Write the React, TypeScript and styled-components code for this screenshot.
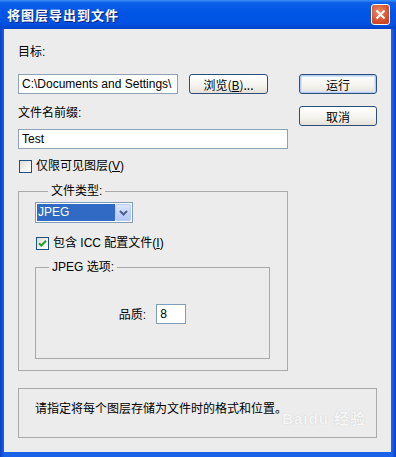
import React from 'react'
import styled, { createGlobalStyle } from 'styled-components'

const GlobalStyle = createGlobalStyle`
  html, body {
    margin: 0;
    padding: 0;
    background: #ffffff;
  }
  body {
    font-family: 'Liberation Sans', 'Noto Sans CJK SC', sans-serif;
    font-size: 12px;
    color: #000000;
  }
`

const CheckMark = () => (
  <svg width="9" height="9" viewBox="0 0 9 9">
    <path d="M1 4.2 L3.3 6.6 L8 1.8" stroke="#21a121" strokeWidth="2" fill="none" />
  </svg>
)

const Chevron = () => (
  <svg width="9" height="6" viewBox="0 0 9 6">
    <path d="M1 1 L4.5 4.5 L8 1" stroke="#4d6185" strokeWidth="2" fill="none" />
  </svg>
)

const App = () => {
  return (
    <>
      <GlobalStyle />
      <Window>
        <TitleBar>
          <Title>将图层导出到文件</Title>
          <CloseButton>
            <svg width="11" height="11" viewBox="0 0 11 11">
              <path d="M1.5 1.5 L9.5 9.5 M9.5 1.5 L1.5 9.5" stroke="#ffffff" strokeWidth="2" />
            </svg>
          </CloseButton>
        </TitleBar>
        <Body>
          <TopSection>
            <LeftColumn>
              <Label>目标:</Label>
              <PathRow>
                <TextBox $width={160} defaultValue="C:\Documents and Settings\" />
                <Button $width={79}>
                  浏览(<u>B</u>)...
                </Button>
              </PathRow>
              <Label $top={11}>文件名前缀:</Label>
              <TextBox $width={270} $top={8} defaultValue="Test" />
              <CheckRow $top={11}>
                <CheckBox />
                <span>
                  仅限可见图层(<u>V</u>)
                </span>
              </CheckRow>
              <GroupBox $top={10} $pad="3px 17px 11px 16px">
                <Legend>文件类型:</Legend>
                <Select>
                  <SelectValue>JPEG</SelectValue>
                  <SelectArrow>
                    <Chevron />
                  </SelectArrow>
                </Select>
                <CheckRow $top={14}>
                  <CheckBox>
                    <CheckMark />
                  </CheckBox>
                  <span>
                    包含 ICC 配置文件(<u>I</u>)
                  </span>
                </CheckRow>
                <GroupBox $top={9} $pad="0 0 6px 0">
                  <Legend>JPEG 选项:</Legend>
                  <QualityRow>
                    <span>品质:</span>
                    <SmallBox defaultValue="8" />
                  </QualityRow>
                </GroupBox>
              </GroupBox>
            </LeftColumn>
            <RightColumn>
              <Button $width={78} $default>
                运行
              </Button>
              <Button $width={78}>取消</Button>
            </RightColumn>
          </TopSection>
          <InfoBox>
            请指定将每个图层存储为文件时的格式和位置。
            <Watermark>
              Bai<b>du</b> 经验
            </Watermark>
          </InfoBox>
        </Body>
      </Window>
    </>
  )
}

const Window = styled.div`
  width: 396px;
  height: 457px;
  display: flex;
  flex-direction: column;
  background: linear-gradient(90deg, #0a3fc9 0%, #1a62e8 1%, #1a62e8 99%, #0a3fc9 100%);
  box-sizing: border-box;
  padding: 0 5px 5px 4px;
`

const TitleBar = styled.div`
  height: 29px;
  margin: 0 -5px 0 -4px;
  padding: 0 6px 0 7px;
  display: flex;
  align-items: center;
  justify-content: space-between;
  background: linear-gradient(
    180deg,
    #3d8ef7 0%,
    #0a5ee8 10%,
    #0055e6 45%,
    #0052e2 80%,
    #0043c8 100%
  );
`

const Title = styled.span`
  color: #ffffff;
  font-family: 'Noto Sans CJK SC', sans-serif;
  font-size: 13px;
  font-weight: bold;
  letter-spacing: 1px;
  text-shadow: 1px 1px 0 #0a1e7a;
`

const CloseButton = styled.div`
  width: 19px;
  height: 21px;
  box-sizing: border-box;
  border: 1px solid #ffffff;
  border-radius: 3px;
  display: flex;
  align-items: center;
  justify-content: center;
  background: radial-gradient(circle at 40% 35%, #ec8f6e 0%, #d8552f 55%, #c0391a 100%);
`

const Body = styled.div`
  flex: 1;
  background: #ececec;
  padding: 15px 14px 0 14px;
  display: flex;
  flex-direction: column;
`

const TopSection = styled.div`
  display: flex;
  gap: 11px;
`

const LeftColumn = styled.div`
  width: 270px;
  display: flex;
  flex-direction: column;
`

const RightColumn = styled.div`
  padding-top: 30px;
  display: flex;
  flex-direction: column;
  gap: 12px;
`

const Label = styled.div<{ $top?: number }>`
  margin-top: ${(p) => p.$top ?? 0}px;
  line-height: 16px;
  height: 16px;
`

const PathRow = styled.div`
  margin-top: 14px;
  display: flex;
  gap: 11px;
`

const TextBox = styled.input.attrs({ readOnly: true })<{ $width: number; $top?: number }>`
  width: ${(p) => p.$width}px;
  height: 20px;
  margin-top: ${(p) => p.$top ?? 0}px;
  box-sizing: border-box;
  border: 1px solid #8fa1b5;
  background: #ffffff;
  padding: 0 3px;
  font-family: 'Liberation Sans', 'Noto Sans CJK SC', sans-serif;
  font-size: 12px;
  color: #000000;
  outline: none;
`

const SmallBox = styled(TextBox).attrs({ $width: 30 })`
  border-color: #7f9db9;
`

const Button = styled.div<{ $width: number; $default?: boolean }>`
  width: ${(p) => p.$width}px;
  height: 20px;
  box-sizing: border-box;
  border: 1px solid #2c4f7a;
  border-radius: 3px;
  display: flex;
  align-items: center;
  justify-content: center;
  font-family: 'Noto Sans CJK SC', sans-serif;
  font-size: 12px;
  background: linear-gradient(180deg, #ffffff 0%, #f4f3ee 60%, #e3e0d7 100%);
  box-shadow: ${(p) => (p.$default ? 'inset 0 0 0 1px #b5cdf4, inset 0 0 0 2px #d6e2f8' : 'none')};
`

const CheckRow = styled.div<{ $top?: number }>`
  margin-top: ${(p) => p.$top ?? 0}px;
  display: flex;
  align-items: center;
  gap: 4px;
  height: 13px;
  line-height: 13px;
  white-space: nowrap;
`

const CheckBox = styled.div`
  width: 13px;
  height: 13px;
  margin-left: 1px;
  box-sizing: border-box;
  border: 1px solid #1c5180;
  background: linear-gradient(135deg, #dcdcd7 0%, #f4f4f1 60%, #ffffff 100%);
  display: flex;
  align-items: center;
  justify-content: center;
`

const GroupBox = styled.fieldset<{ $top?: number; $pad: string }>`
  margin: ${(p) => p.$top ?? 0}px 0 0 0;
  padding: ${(p) => p.$pad};
  border: 1px solid #a9a9a9;
  min-width: 0;
`

const Legend = styled.legend`
  margin-left: 13px;
  padding: 0 3px;
  line-height: 16px;
  font-family: 'Liberation Sans', 'Noto Sans CJK SC', sans-serif;
  font-size: 12px;
`

const Select = styled.div`
  width: 98px;
  height: 21px;
  box-sizing: border-box;
  border: 1px solid #7f9db9;
  background: #ffffff;
  display: flex;
  padding: 1px;
`

const SelectValue = styled.div`
  flex: 1;
  background: #316ac5;
  color: #ffffff;
  line-height: 17px;
  padding-left: 1px;
`

const SelectArrow = styled.div`
  width: 16px;
  box-sizing: border-box;
  border: 1px solid #b8ccf5;
  border-radius: 2px;
  background: linear-gradient(180deg, #dbe6fe 0%, #c3d3fd 50%, #b3c7f7 100%);
  display: flex;
  align-items: center;
  justify-content: center;
`

const QualityRow = styled.div`
  height: 77px;
  display: flex;
  align-items: center;
  justify-content: center;
  gap: 10px;
`

const InfoBox = styled.div`
  position: relative;
  margin-top: 17px;
  height: 50px;
  box-sizing: border-box;
  border: 1px solid #a9a9a9;
  padding: 11px 0 0 16px;
  line-height: 16px;
  font-family: 'Noto Sans CJK SC', sans-serif;
`

const Watermark = styled.span`
  position: absolute;
  right: 10px;
  top: 22px;
  font-family: 'Liberation Sans', 'Noto Sans CJK SC', sans-serif;
  font-size: 15px;
  font-weight: bold;
  color: rgba(255, 255, 255, 0.85);
  text-shadow: 0 0 1px rgba(160, 160, 160, 0.6);
  letter-spacing: 1px;
`

export default App
